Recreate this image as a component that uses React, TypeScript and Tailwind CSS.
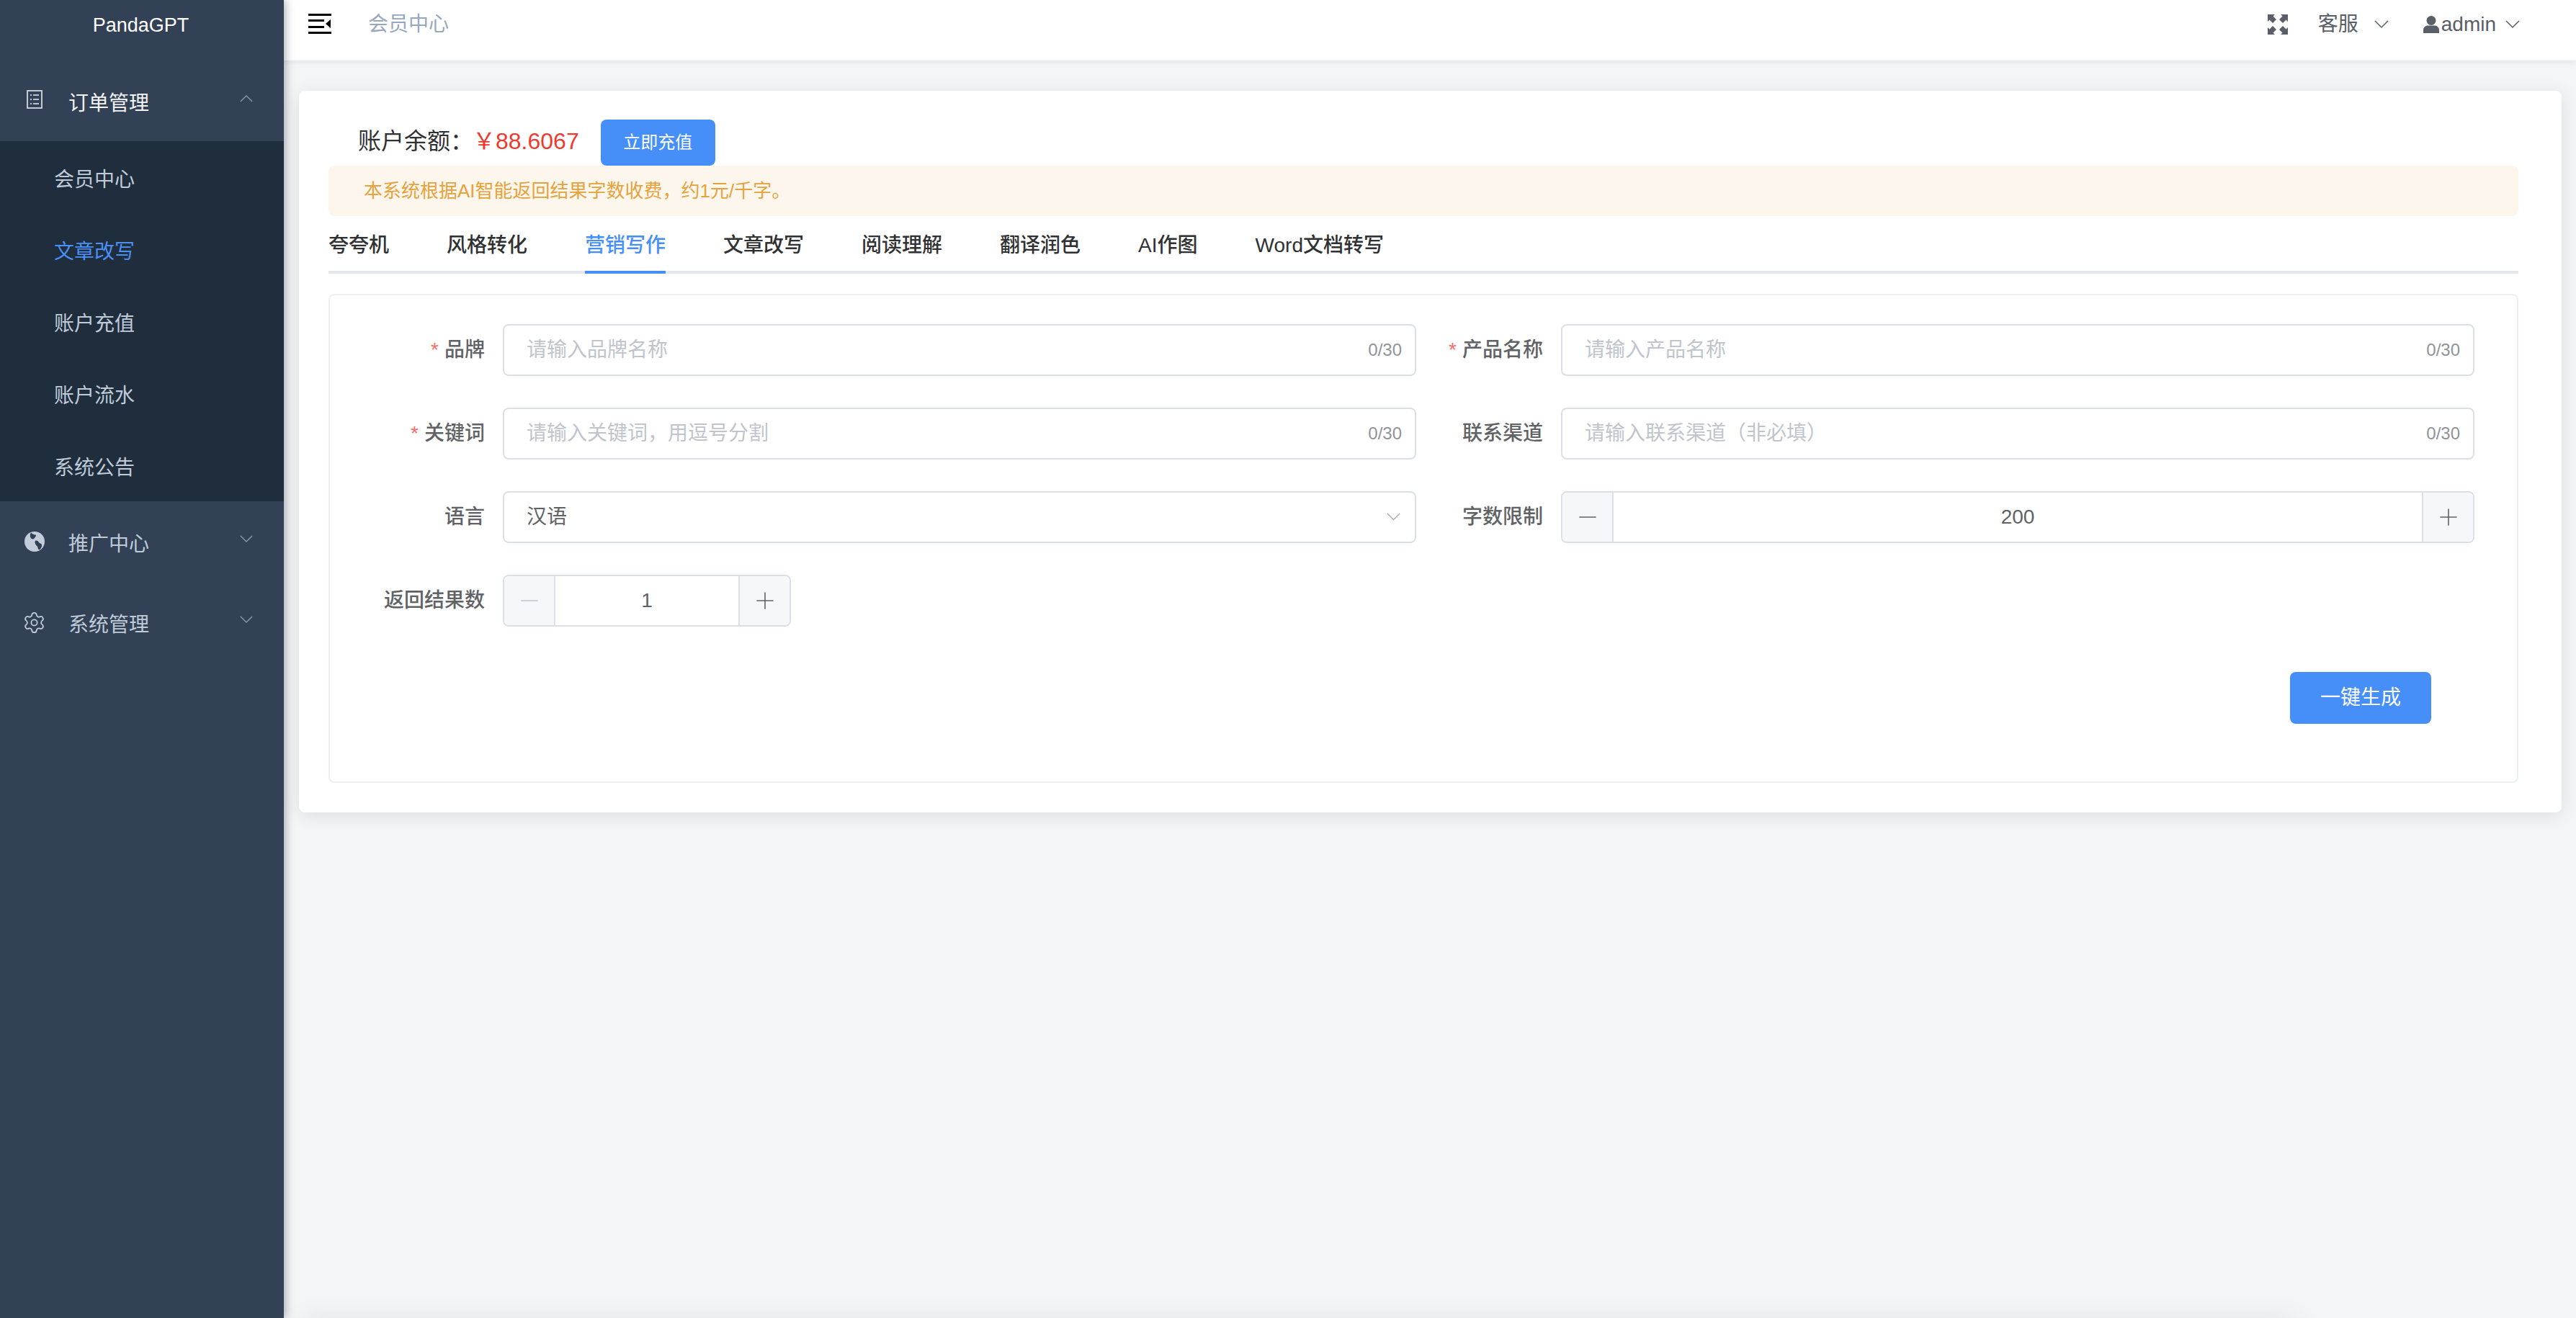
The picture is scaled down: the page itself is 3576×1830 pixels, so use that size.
import { Minus, Plus, Settings } from "lucide-react";
import type { ReactNode } from "react";

const SUB_MENU = ["会员中心", "文章改写", "账户充值", "账户流水", "系统公告"];
const TABS = ["夸夸机", "风格转化", "营销写作", "文章改写", "阅读理解", "翻译润色", "AI作图", "Word文档转写"];

function Chevron({ up, width, className }: { up?: boolean; width: number; className?: string }) {
  return (
    <svg width={width} height={width / 2 + 2} viewBox="0 0 20 12" fill="none" stroke="currentColor" strokeWidth="1.5" className={className}>
      <path d={up ? "M1 11L10 2l9 9" : "M1 1l9 9 9-9"} />
    </svg>
  );
}

function DocIcon() {
  return (
    <svg width="22" height="26" viewBox="0 0 22 26" fill="none" stroke="#e8ecf1" strokeWidth="1.6">
      <rect x="1" y="1" width="20" height="24" />
      <path d="M9 7h8M9 13h8M9 19h8M5 7h2M5 13h2M5 19h2" />
    </svg>
  );
}

function GlobeIcon() {
  return (
    <svg width="28" height="28" viewBox="0 0 28 28">
      <circle cx="14" cy="14" r="14" fill="#c3ccd8" />
      <path d="M9 1.500c2 2 4 3 6 3 1 0 1.500 1.500 0 3-1 1-1.500 3-3.500 3-1.500 0-3-1-3.500-3-.4-2 0-4.500 1-6z" fill="#304156" />
      <path d="M15 13c2-1 4 0 5 2 1 1.500 3 1.500 4 3 .5 2-.5 5-2.500 7-1.500.5-3-.5-3-2.500 0-2-2-2.500-3-4.500-.8-1.500-1.500-4-.5-5z" fill="#304156" />
    </svg>
  );
}

function HamburgerIcon() {
  return (
    <svg width="32" height="28" viewBox="0 0 32 28" fill="#000">
      <rect x="0" y="0" width="32" height="3" />
      <rect x="0" y="8" width="22" height="3" />
      <rect x="0" y="17" width="22" height="3" />
      <rect x="0" y="25" width="32" height="3" />
      <path d="M24 14l7-6v12z" />
    </svg>
  );
}

function FullscreenIcon() {
  return (
    <svg width="28" height="28" viewBox="0 0 28 28" fill="#5a5e66">
      <path d="M0 0h10L7.500 2.500 12 7 7 12 2.500 7.500 0 10z" />
      <path d="M28 0H18l2.500 2.500L16 7l5 5 4.500-4.500L28 10z" />
      <path d="M0 28h10l-2.500-2.500L12 21l-5-5-4.500 4.500L0 18z" />
      <path d="M28 28H18l2.500-2.500L16 21l5-5 4.500 4.500L28 18z" />
    </svg>
  );
}

function UserIcon() {
  return (
    <svg width="22" height="24" viewBox="0 0 22 24" fill="#5a5e66">
      <circle cx="11" cy="6.500" r="6.500" />
      <path d="M0 24v-4c0-4 3-6.500 6-6.500h10c3 0 6 2.500 6 6.500v4z" />
    </svg>
  );
}

function MenuRow({ icon, label, open, light }: { icon: ReactNode; label: string; open?: boolean; light?: boolean }) {
  return (
    <div className={`flex h-[112px] items-center ${light ? "text-[#f4f4f5]" : "text-[#bfcbd9]"}`}>
      <span className="flex w-[95px] shrink-0 justify-center pb-[4px]">{icon}</span>
      <span className="flex-1 pt-[8px] text-[28px]">{label}</span>
      <Chevron up={open} width={18} className="mr-[43px] mb-[8px] text-[#8b97a6]" />
    </div>
  );
}

function FormItem({ label, required, labelWidth, className, children }: { label: string; required?: boolean; labelWidth: string; className: string; children: ReactNode }) {
  return (
    <div className={`flex min-w-0 items-center ${className}`}>
      <label className={`flex shrink-0 items-center justify-end pr-[25px] text-[28px] font-medium text-[#606266] ${labelWidth}`}>
        {required && <span className="mr-[8px] text-[#f56c6c]">*</span>}
        {label}
      </label>
      {children}
    </div>
  );
}

function TextField({ placeholder }: { placeholder: string }) {
  return (
    <div className="flex h-[72px] flex-1 items-center justify-between rounded-[8px] border-2 border-[#dcdfe6] bg-white pr-[18px] pl-[31px]">
      <span className="text-[28px] text-[#c0c4cc]">{placeholder}</span>
      <span className="text-[24px] text-[#909399]">0/30</span>
    </div>
  );
}

function NumberField({ value, className, minusMuted }: { value: string; className: string; minusMuted?: boolean }) {
  return (
    <div className={`flex h-[72px] items-stretch rounded-[8px] border-2 border-[#dcdfe6] text-[#606266] ${className}`}>
      <span className="flex w-[71px] items-center justify-center rounded-l-[6px] border-r-2 border-[#dcdfe6] bg-[#f5f7fa]">
        <Minus size={38} strokeWidth={1} className={minusMuted ? "text-[#c0c4cc]" : "text-[#606266]"} />
      </span>
      <span className="flex flex-1 items-center justify-center bg-white text-[28px]">{value}</span>
      <span className="flex w-[71px] items-center justify-center rounded-r-[6px] border-l-2 border-[#dcdfe6] bg-[#f5f7fa]">
        <Plus size={38} strokeWidth={1} />
      </span>
    </div>
  );
}

export default function App() {
  return (
    <div className="flex h-[1830px] overflow-hidden bg-[#f4f5f7] font-['Liberation_Sans','Noto_Sans_CJK_SC',sans-serif]">
      <aside className="relative z-20 w-[394px] shrink-0 bg-[#324155] shadow-[2px_0_12px_rgba(0,21,41,0.35)]">
        <div className="flex h-[84px] items-start justify-center pt-[15px] text-[27px] font-medium text-white">
          <span className="pr-[3px]">PandaGPT</span>
        </div>
        <MenuRow icon={<DocIcon />} label="订单管理" open light />
        <div className="bg-[#1f2d3d]">
          {SUB_MENU.map((item) => (
            <div
              key={item}
              className={`flex h-[100px] items-center pt-[8px] pl-[75px] text-[28px] ${item === "文章改写" ? "text-[#4a90f5]" : "text-[#bfcbd9]"}`}
            >
              {item}
            </div>
          ))}
        </div>
        <MenuRow icon={<span className="pt-[3px]"><GlobeIcon /></span>} label="推广中心" />
        <MenuRow icon={<Settings size={33} strokeWidth={1.3} className="mt-[4px] shrink-0 text-[#c3ccd8]" />} label="系统管理" />
      </aside>

      <div className="flex min-w-0 flex-1 flex-col">
        <header className="relative z-10 flex h-[84px] shrink-0 items-center bg-white pr-[78px] pb-[16px] pl-[34px] shadow-[0_2px_8px_rgba(0,21,41,0.08)]">
          <span className="mb-[2px]"><HamburgerIcon /></span>
          <span className="ml-[51px] text-[28px] text-[#97a8be]">会员中心</span>
          <div className="ml-auto flex items-center text-[28px] text-[#5a5e66]">
            <FullscreenIcon />
            <span className="ml-[42px]">客服</span>
            <Chevron width={20} className="ml-[22px]" />
            <span className="ml-[48px] mb-[1px]"><UserIcon /></span>
            <span className="ml-[3px]">admin</span>
            <Chevron width={20} className="ml-[13px]" />
          </div>
        </header>

        <main className="flex-1 pt-[42px] pr-[20px] pl-[21px]">
          <section className="rounded-[8px] bg-white pt-[40px] pr-[60px] pb-[41px] pl-[41px] shadow-[0_4px_24px_rgba(0,0,0,0.1)]">
            <div className="flex h-[64px] items-center pl-[41px]">
              <span className="pb-[4px] text-[32px] text-[#303133]">账户余额：</span>
              <span className="-ml-[1px] pb-[4px] text-[32px] text-[#ee3a2e]">￥88.6067</span>
              <button className="ml-[30px] h-[64px] w-[159px] rounded-[8px] bg-[#468ff9] text-[24px] text-white">立即充值</button>
            </div>
            <div className="flex h-[70px] items-center rounded-[8px] bg-[#fdf6ec] pl-[49px] text-[26px] text-[#e6a23c]">
              本系统根据AI智能返回结果字数收费，约1元/千字。
            </div>

            <div className="flex h-[80px] gap-[80px] border-b-4 border-[#e4e7ed] text-[28px] font-medium text-[#303133]">
              {TABS.map((tab) => (
                <span
                  key={tab}
                  className={`-mb-[4px] flex items-center border-b-4 pt-[5px] ${tab === "营销写作" ? "border-[#468ff9] text-[#468ff9]" : "border-transparent"}`}
                >
                  {tab}
                </span>
              ))}
            </div>

            <div className="mt-[28px] rounded-[8px] border-2 border-[#ebeef5] pt-[40px] pr-[59px] pb-[80px]">
              <div className="flex flex-col gap-[44px]">
                <div className="flex">
                  <FormItem label="品牌" required labelWidth="w-[240px]" className="w-[1508px] shrink-0"><TextField placeholder="请输入品牌名称" /></FormItem>
                  <FormItem label="产品名称" required labelWidth="w-[201px]" className="flex-1"><TextField placeholder="请输入产品名称" /></FormItem>
                </div>
                <div className="flex">
                  <FormItem label="关键词" required labelWidth="w-[240px]" className="w-[1508px] shrink-0"><TextField placeholder="请输入关键词，用逗号分割" /></FormItem>
                  <FormItem label="联系渠道" labelWidth="w-[201px]" className="flex-1"><TextField placeholder="请输入联系渠道（非必填）" /></FormItem>
                </div>
                <div className="flex">
                  <FormItem label="语言" labelWidth="w-[240px]" className="w-[1508px] shrink-0">
                    <div className="flex h-[72px] flex-1 items-center justify-between rounded-[8px] border-2 border-[#dcdfe6] bg-white pr-[20px] pl-[31px] text-[28px] text-[#606266]">
                      汉语
                      <Chevron width={19} className="text-[#a8abb2]" />
                    </div>
                  </FormItem>
                  <FormItem label="字数限制" labelWidth="w-[201px]" className="flex-1"><NumberField value="200" className="flex-1" /></FormItem>
                </div>
                <div className="flex">
                  <FormItem label="返回结果数" labelWidth="w-[240px]" className="w-[1508px] shrink-0"><NumberField value="1" className="w-[400px]" minusMuted /></FormItem>
                </div>
              </div>
              <div className="mt-[63px] flex justify-end pr-[60px]">
                <button className="h-[72px] w-[196px] rounded-[8px] bg-[#468ff9] text-[28px] text-white">一键生成</button>
              </div>
            </div>
          </section>
          {/* next card sits just below the fold, only its shadow shows */}
          <div className="mt-[706px] h-[40px] w-[2775px] rounded-[8px] bg-white shadow-[0_4px_40px_rgba(0,0,0,0.1)]" />
        </main>
      </div>
    </div>
  );
}
